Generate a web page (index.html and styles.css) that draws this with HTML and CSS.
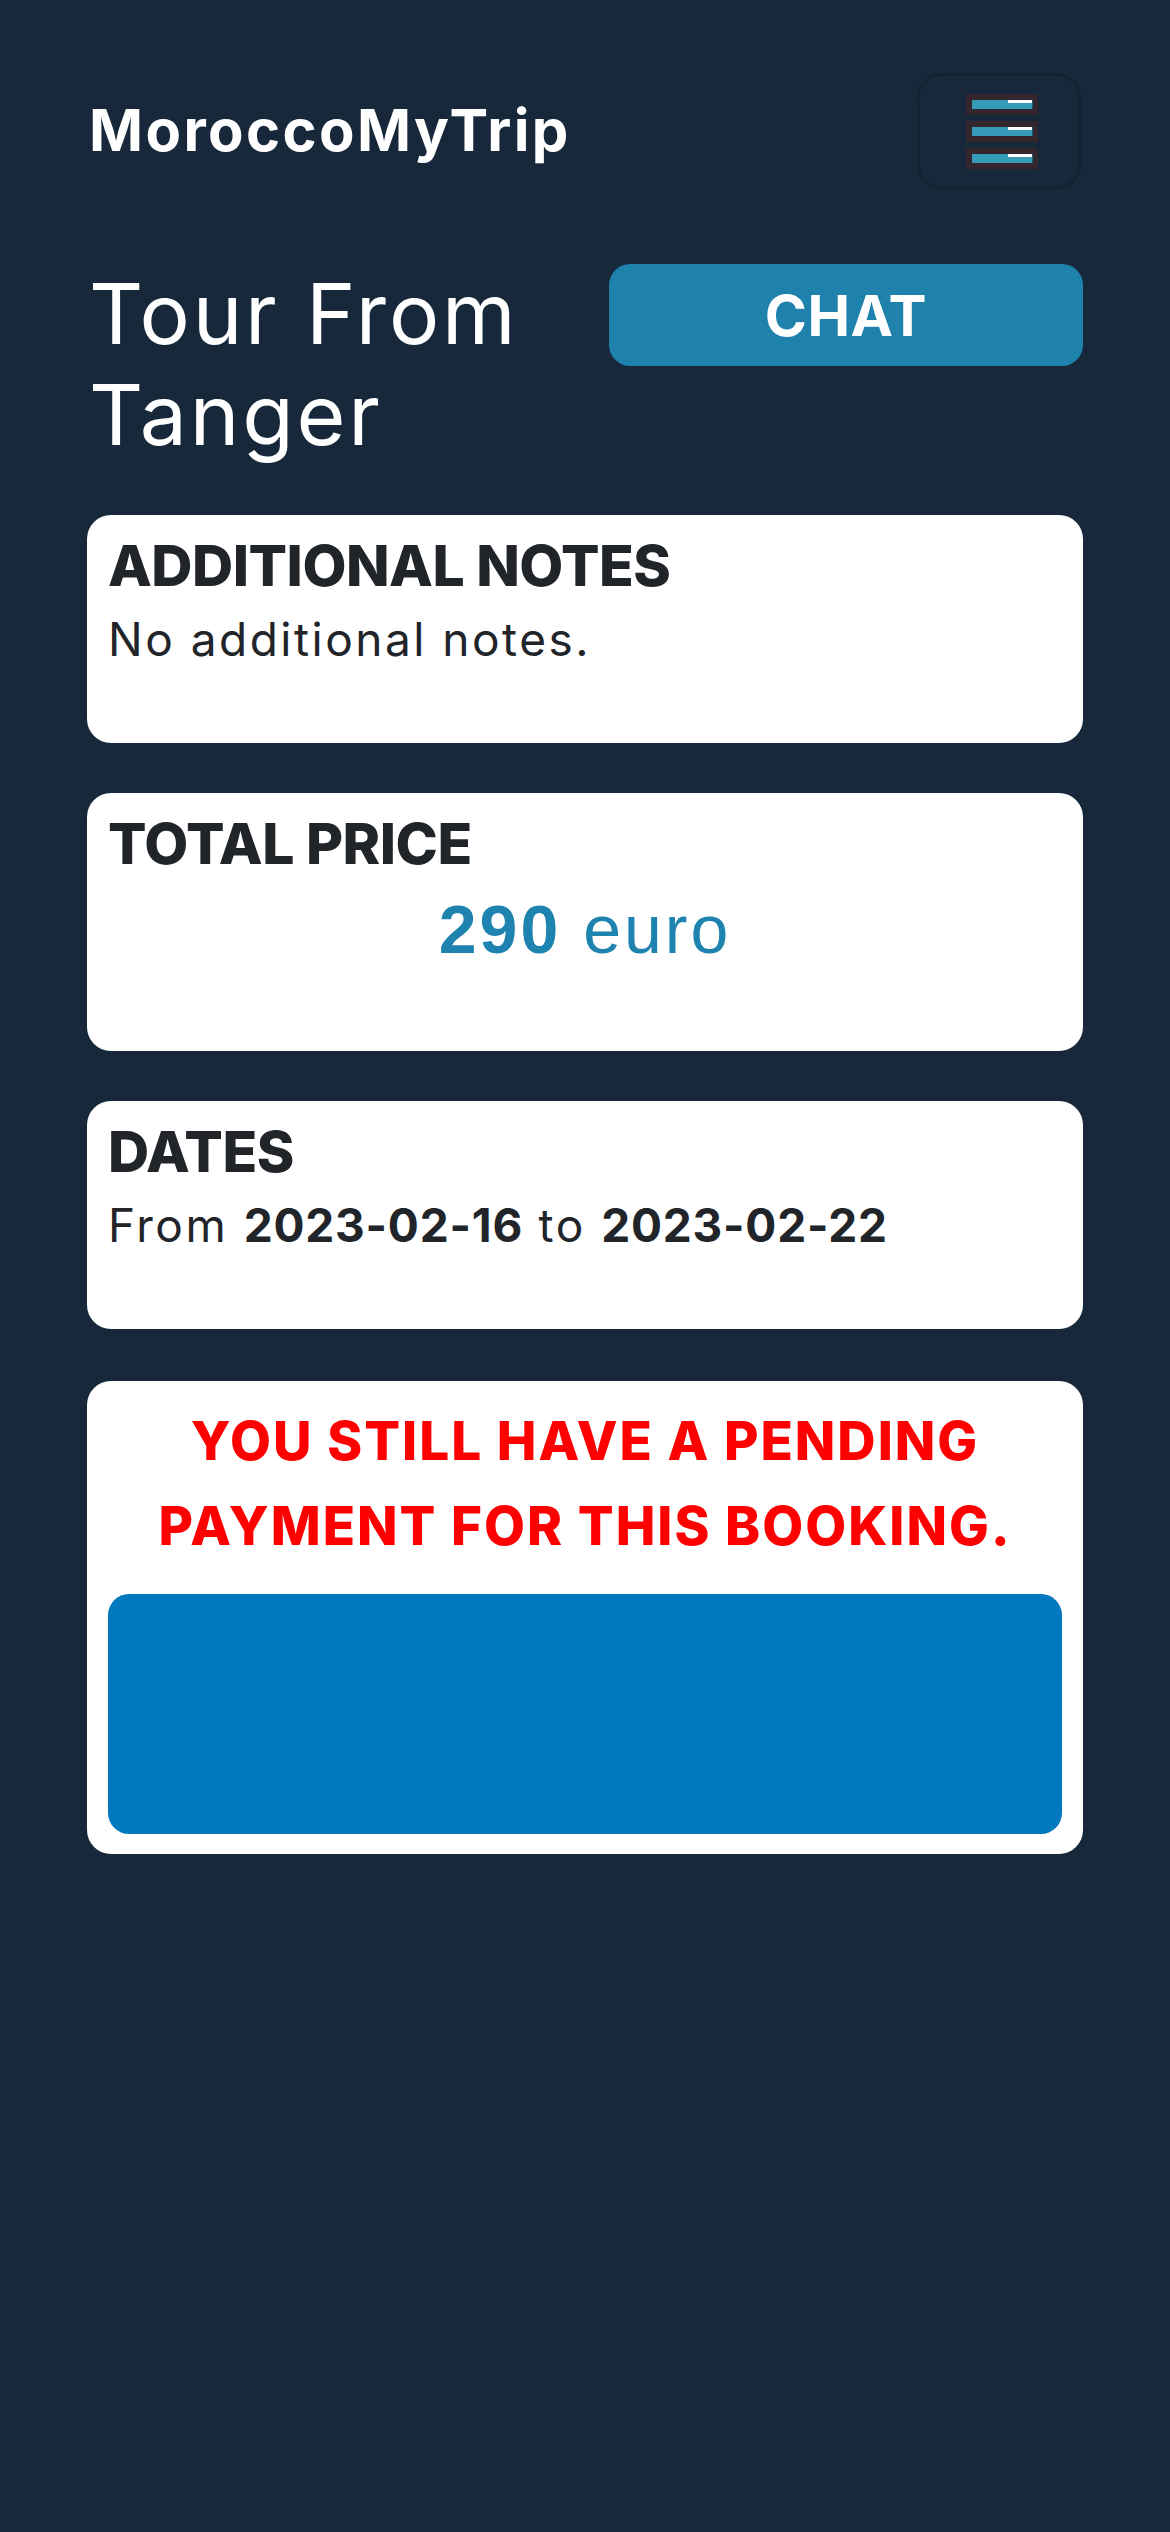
FILE: index.html
```html
<!DOCTYPE html>
<html lang="en">
<head>
<meta charset="utf-8">
<title>MoroccoMyTrip - Tour From Tanger</title>
<link rel="stylesheet" href="styles.css">
</head>
<body>
<div class="page">
  <header class="topbar">
    <a class="brand" href="#">MoroccoMyTrip</a>
    <button class="toggler" type="button" aria-label="Menu">
      <svg width="72" height="75" viewBox="0 0 72 75">
        <g>
          <rect x="0" y="0" width="72" height="21" fill="#33272d"/>
          <rect x="6" y="6" width="60" height="9" fill="#359bb6"/>
          <rect x="42" y="6" width="24" height="3" fill="#ffffff"/>
          <rect x="66" y="6" width="1" height="9" fill="#1f5a78"/>
        </g>
        <g transform="translate(0 27)">
          <rect x="0" y="0" width="72" height="21" fill="#33272d"/>
          <rect x="6" y="6" width="60" height="9" fill="#359bb6"/>
          <rect x="42" y="6" width="24" height="3" fill="#ffffff"/>
          <rect x="66" y="6" width="1" height="9" fill="#1f5a78"/>
        </g>
        <g transform="translate(0 54)">
          <rect x="0" y="0" width="72" height="21" fill="#33272d"/>
          <rect x="6" y="6" width="60" height="9" fill="#359bb6"/>
          <rect x="42" y="6" width="24" height="3" fill="#ffffff"/>
          <rect x="66" y="6" width="1" height="9" fill="#1f5a78"/>
        </g>
      </svg>
    </button>
  </header>

  <section class="title-row">
    <h1 class="tour-title">Tour From Tanger</h1>
    <a class="chat-btn" href="#">CHAT</a>
  </section>

  <section class="card">
    <h2 class="card-title">ADDITIONAL NOTES</h2>
    <p class="card-text">No additional notes.</p>
  </section>

  <section class="card card-price">
    <h2 class="card-title">TOTAL PRICE</h2>
    <p class="price"><b>290</b> euro</p>
  </section>

  <section class="card">
    <h2 class="card-title">DATES</h2>
    <p class="card-text">From <b>2023-02-16</b> to <b>2023-02-22</b></p>
  </section>

  <section class="card card-pay">
    <p class="pending">YOU STILL HAVE A PENDING PAYMENT FOR THIS BOOKING.</p>
    <div class="pay-box"></div>
  </section>
</div>
</body>
</html>
```

FILE: styles.css
```css
html, body {
  margin: 0;
  padding: 0;
  background: #16283a;
}

body {
  font-family: Inter, "Noto Sans", sans-serif;
  color: #212529;
  min-height: 2532px;
}

.page {
  padding: 73px 87px 0 87px;
}

.topbar {
  display: flex;
  align-items: center;
  justify-content: space-between;
}

.brand {
  color: #ffffff;
  text-decoration: none;
  font-weight: 700;
  font-size: 58px;
  letter-spacing: 2.4px;
  line-height: 1.2;
  padding-left: 2px;
}

.toggler {
  width: 164px;
  height: 116px;
  box-sizing: border-box;
  border: 3px solid #132333;
  border-radius: 24px;
  background: transparent;
  display: flex;
  align-items: center;
  justify-content: center;
  padding: 0 0 0 6px;
  margin-right: 2px;
}

.toggler svg {
  display: block;
}

.title-row {
  display: flex;
  align-items: flex-start;
  gap: 24px;
  margin-top: 75px;
}

.tour-title {
  flex: 1;
  margin: -1px 0 0 0;
  color: #ffffff;
  font-weight: 400;
  font-size: 84px;
  line-height: 101px;
  letter-spacing: 2.8px;
  padding-left: 2px;
}

.chat-btn {
  flex: none;
  width: 474px;
  height: 102px;
  border-radius: 21px;
  background: #1e82ad;
  color: #ffffff;
  text-decoration: none;
  font-weight: 700;
  font-size: 57px;
  letter-spacing: 0.5px;
  display: flex;
  align-items: center;
  justify-content: center;
}

.card {
  background: #ffffff;
  border-radius: 24px;
  padding: 15px 21px 68px 21px;
  margin-top: 50px;
}

.card-title {
  margin: 0;
  font-weight: 800;
  font-size: 57px;
  line-height: 72px;
  letter-spacing: -0.5px;
}

.card-text {
  margin: 1px 0 0 0;
  font-weight: 400;
  font-size: 46px;
  line-height: 72px;
  letter-spacing: 2.5px;
}

.card-text b {
  font-weight: 700;
  letter-spacing: 0.8px;
}

.card-price {
  padding-bottom: 82px;
}

.price {
  margin: 10px 0 0 0;
  text-align: center;
  font-family: "Liberation Sans", Arial, sans-serif;
  font-size: 68px;
  line-height: 79px;
  letter-spacing: 3px;
  color: #1e83ae;
}

.price b {
  font-weight: 700;
}

.card-pay {
  padding: 18px 21px 20px 21px;
  margin-top: 52px;
}

.pending {
  margin: 0;
  text-align: center;
  color: #ff0000;
  font-weight: 800;
  font-size: 53px;
  line-height: 85px;
  letter-spacing: 2px;
  padding: 0 30px;
}

.pay-box {
  margin-top: 25px;
  height: 240px;
  border-radius: 21px;
  background: #0279bf;
}
```
